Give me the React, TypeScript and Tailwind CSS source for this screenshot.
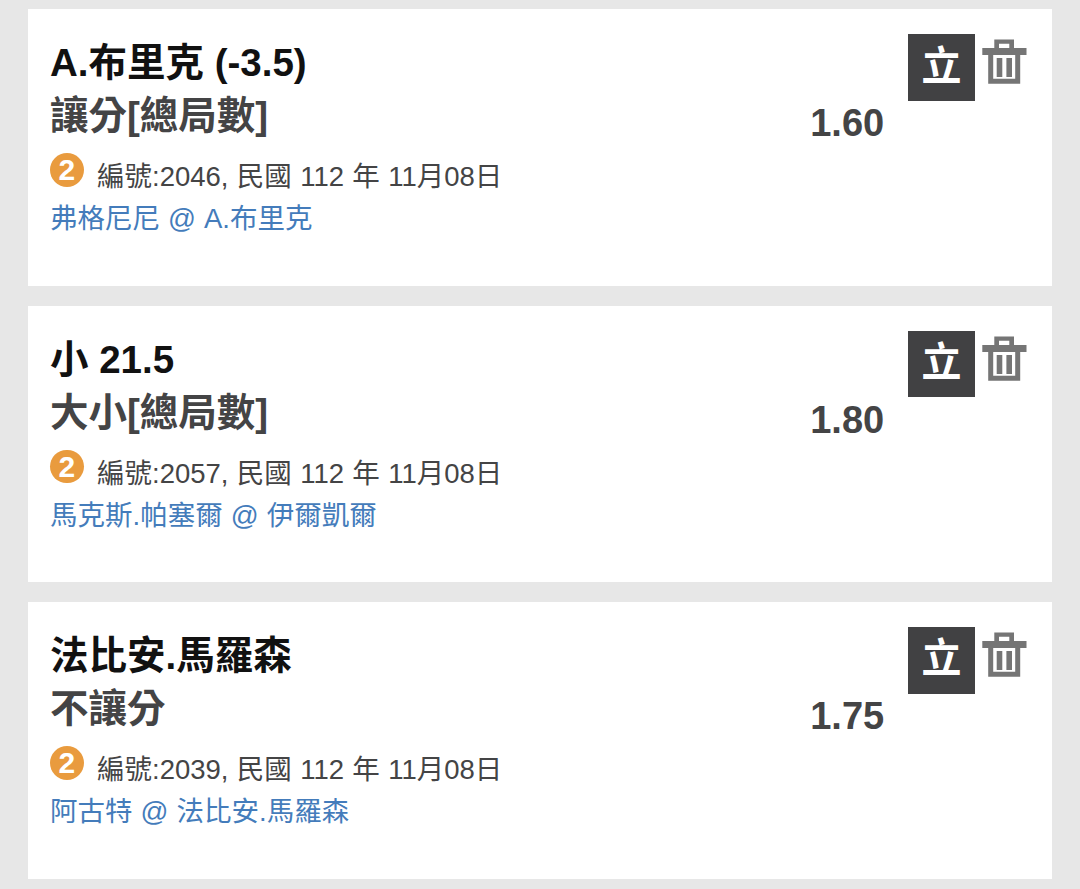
interface Bet {
  id: string;
  pick: string;
  market: string;
  match: string;
  odds: string;
}

const BETS: Bet[] = [
  { id: '2046', pick: 'A.布里克 (-3.5)', market: '讓分[總局數]', match: '弗格尼尼 @ A.布里克', odds: '1.60' },
  { id: '2057', pick: '小 21.5', market: '大小[總局數]', match: '馬克斯.帕塞爾 @ 伊爾凱爾', odds: '1.80' },
  { id: '2039', pick: '法比安.馬羅森', market: '不讓分', match: '阿古特 @ 法比安.馬羅森', odds: '1.75' },
];

const TrashIcon = () => (
  <svg className="w-[45px] h-[45px]" viewBox="0 0 45 45" fill="#757575">
    <path
      fillRule="evenodd"
      d="M12.3 0.5H32V9H44.5V16H38.2V44.8H6.2V16H0.3V9H12.3ZM17 4.8V9H27.3V4.8ZM11.2 16V39.7H33.2V16Z"
    />
    <path d="M14.7 19h5.6v19h-5.6zM24.4 19H30v19h-5.6z" />
  </svg>
);

const BetCard = ({ bet }: { bet: Bet }) => (
  <div className="h-[276.7px] bg-white flex pl-[22.5px] pr-[25px] pt-[25px]">
    <div className="flex-1 pt-0.5">
      <div className="text-[38.5px] leading-[53px] font-bold text-[#111111]">{bet.pick}</div>
      <div className="text-[38.5px] leading-[53px] font-bold text-[#444445]">{bet.market}</div>
      <div className="flex h-14 pt-[11px]">
        <span className="w-[33.5px] h-[33.5px] mr-[13.5px] rounded-full bg-[#e99b3e] text-white text-[30px] leading-[34px] font-bold text-center">
          2
        </span>
        <span className="pt-[3px] text-[27.5px] leading-[42px] [word-spacing:0.7px] text-[#444445]">
          編號:{bet.id}, 民國 112 年 11月08日
        </span>
      </div>
      <a className="block text-[27.5px] leading-[42px] [word-spacing:0.4px] text-[#447cbb]">{bet.match}</a>
    </div>
    <div className="pt-[67px] mr-6 text-[38px] leading-[45px] font-bold text-[#444445]">{bet.odds}</div>
    <button className="w-[66.5px] h-[66.5px] mr-[7px] pb-1 bg-[#414143] text-white text-[40px] leading-[62px] font-bold text-center">
      立
    </button>
    <button className="h-[45px] mt-[5px]">
      <TrashIcon />
    </button>
  </div>
);

export default function App() {
  return (
    <div
      lang="zh-TW"
      className="h-[889px] overflow-hidden bg-[#e7e7e7] pl-[27.5px] pr-[28.3px] pt-[9.3px] flex flex-col gap-[19.7px] whitespace-nowrap font-['Liberation_Sans','Noto_Sans_CJK_TC',sans-serif]"
    >
      {BETS.map((bet) => (
        <BetCard key={bet.id} bet={bet} />
      ))}
    </div>
  );
}
